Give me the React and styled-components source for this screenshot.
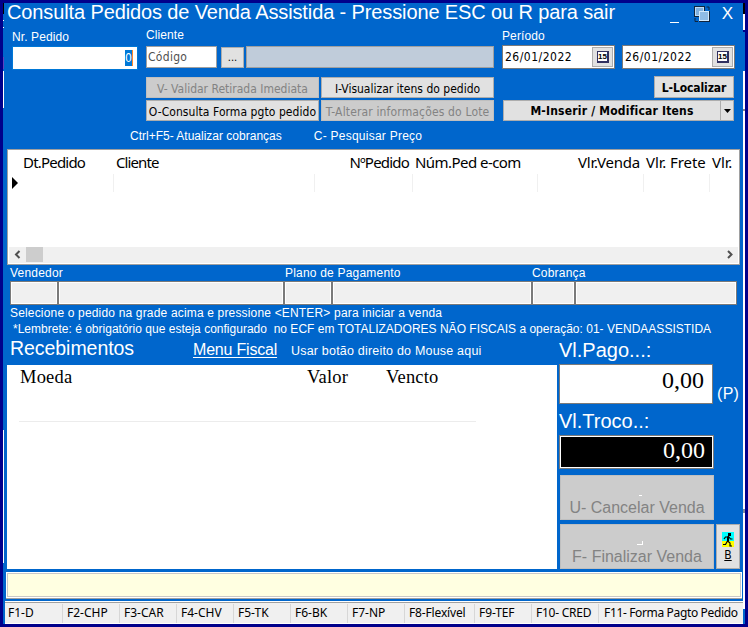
import styled, { createGlobalStyle, css } from "styled-components";

const arial = `"Liberation Sans", Arial, sans-serif`;
const tahoma = `"DejaVu Sans Condensed", "DejaVu Sans", Tahoma, sans-serif`;
const times = `"Liberation Serif", "Times New Roman", serif`;

const blue = "#0066cc";
const navy = "#00008b";

const columns = [
  { label: "Dt.Pedido", width: 93, spacing: -0.8 },
  { label: "Cliente", width: 201, spacing: -0.9 },
  { label: "NºPedido", width: 98, right: true, spacing: -0.8 },
  { label: "Núm.Ped e-com", width: 125 },
  { label: "Vlr.Venda", width: 106, right: true, spacing: -0.2 },
  { label: "Vlr. Frete", width: 66, spacing: -0.1 },
  { label: "Vlr.", width: 29, spacing: -0.1, last: true },
];

const lookups = [
  { label: "Vendedor", width: 274, code: 48 },
  { label: "Plano de Pagamento", width: 248, code: 48, indent: 1 },
  { label: "Cobrança", width: 205, code: 43 },
];

const keys = [
  { label: "F1-D", width: 58, pad: 3 },
  { label: "F2-CHP", width: 57 },
  { label: "F3-CAR", width: 57 },
  { label: "F4-CHV", width: 57 },
  { label: "F5-TK", width: 57 },
  { label: "F6-BK", width: 57 },
  { label: "F7-NP", width: 57 },
  { label: "F8-Flexível", width: 70, spacing: -0.15 },
  { label: "F9-TEF", width: 57, spacing: -0.1 },
  { label: "F10- CRED", width: 67, spacing: -0.25 },
  { label: "F11- Forma Pagto Pedido", width: 142, pad: 5, spacing: -0.35, last: true },
];

function WindowsIcon() {
  return (
    <svg width="16" height="16" viewBox="0 0 16 16">
      <path d="M1 12v3.500h3M12.500 1h2.500v3" fill="none" stroke="#10243c" />
      <rect x="0.5" y="0.5" width="10" height="10" fill="#7fb0de" stroke="#10243c" />
      <rect x="1.500" y="1.500" width="8" height="8" fill="none" stroke="#bcdcf6" />
      <rect x="5" y="5" width="11" height="11" fill="#10243c" />
      <rect x="5.500" y="5.500" width="9" height="9" fill="#8fbce6" stroke="#d2e9fc" />
    </svg>
  );
}

function WalkIcon() {
  return (
    <svg width="12" height="15" viewBox="0 0 12 15">
      <rect width="12" height="9" fill="#00ffff" />
      <rect y="9" width="12" height="6" fill="#ffff00" />
      <rect x="6" y="1" width="3" height="3" fill="#000" />
      <path
        d="M6.500 4L5.500 9L8 11V14H10M5.500 9L3.500 12.500H1M2 7L3.500 5H7L8.500 7H10.500"
        fill="none"
        stroke="#000"
        strokeWidth="1.2"
      />
      <path d="M5 4.500h2v5h-2z" fill="#000" />
    </svg>
  );
}

function DateField({ value }) {
  return (
    <DateBox>
      <span>{value}</span>
      <CalendarButton>
        <CalendarFace>15</CalendarFace>
      </CalendarButton>
    </DateBox>
  );
}

export default function App() {
  return (
    <>
      <Global />
      <Window>
        <LeftEdge />
        <Content>
          <TitleBar>
            <Title>Consulta Pedidos de Venda Assistida - Pressione ESC ou R para sair</Title>
            <TitleActions>
              <Minimize />
              <WindowsIcon />
              <Close>X</Close>
            </TitleActions>
          </TitleBar>

          <Search>
            <OrderColumn>
              <Label>Nr. Pedido</Label>
              <OrderInput>
                <Selected>0</Selected>
              </OrderInput>
            </OrderColumn>

            <ClientColumn>
              <Label $height={20}>Cliente</Label>
              <ClientRow>
                <CodeInput>Código</CodeInput>
                <MoreButton>...</MoreButton>
                <ClientName />
              </ClientRow>
              <ButtonGrid>
                <Button $disabled>V- Validar Retirada Imediata</Button>
                <Button>I-Visualizar itens do pedido</Button>
                <Button $spacing={0.07}>O-Consulta Forma pgto pedido</Button>
                <Button $disabled $spacing={0.15}>T-Alterar informações do Lote</Button>
              </ButtonGrid>
            </ClientColumn>

            <PeriodColumn>
              <Label>Período</Label>
              <Dates>
                <DateField value="26/01/2022" />
                <DateField value="26/01/2022" />
              </Dates>
              <FindButton>L-Localizar</FindButton>
              <SplitButton>
                <span>M-Inserir / Modificar Itens</span>
                <SplitArrow>
                  <svg width="7" height="4" viewBox="0 0 7 4">
                    <path d="M0 0h7L3.500 4z" />
                  </svg>
                </SplitArrow>
              </SplitButton>
            </PeriodColumn>
          </Search>

          <Shortcuts>
            <Shortcut>Ctrl+F5- Atualizar cobranças</Shortcut>
            <Shortcut $spacing={0.25}>C- Pesquisar Preço</Shortcut>
          </Shortcuts>

          <Grid>
            <GridHeader>
              {columns.map((c) => (
                <HeaderCell key={c.label} $width={c.width} $right={c.right} $spacing={c.spacing}>
                  {c.label}
                </HeaderCell>
              ))}
            </GridHeader>
            <GridRow>
              <RowMarker width="6" height="12" viewBox="0 0 6 12">
                <path d="M0 0L6 6L0 12z" />
              </RowMarker>
              {columns.map((c) => (
                <Cell key={c.label} $width={c.width} $last={c.last} />
              ))}
            </GridRow>
            <Scrollbar>
              <svg width="17" height="15" viewBox="0 0 17 15">
                <path d="M10.500 4L7 7.500L10.500 11" fill="none" stroke="#505050" strokeWidth="2" />
              </svg>
              <Thumb />
              <svg width="17" height="15" viewBox="0 0 17 15">
                <path d="M7 4L10.500 7.500L7 11" fill="none" stroke="#505050" strokeWidth="2" />
              </svg>
            </Scrollbar>
          </Grid>

          <Lookups>
            {lookups.map((l) => (
              <Lookup key={l.label} $width={l.width}>
                <LookupLabel $indent={l.indent}>{l.label}</LookupLabel>
                <LookupFields>
                  <LookupField $width={l.code} />
                  <LookupField />
                </LookupFields>
              </Lookup>
            ))}
          </Lookups>

          <Hint>Selecione o pedido na grade acima e pressione &lt;ENTER&gt; para iniciar a venda</Hint>
          <Reminder>
            {"*Lembrete: é obrigatório que esteja configurado  no ECF em TOTALIZADORES NÃO FISCAIS a operação: 01- VENDAASSISTIDA"}
          </Reminder>

          <Bottom>
            <Receipts>
              <ReceiptsHead>
                <Heading>Recebimentos</Heading>
                <FiscalMenu>Menu Fiscal</FiscalMenu>
                <MouseHint>Usar botão direito do Mouse aqui</MouseHint>
              </ReceiptsHead>
              <ReceiptsPanel>
                <ReceiptsColumns>
                  <span>Moeda</span>
                  <span>Valor</span>
                  <span>Vencto</span>
                </ReceiptsColumns>
              </ReceiptsPanel>
            </Receipts>

            <Totals>
              <TotalLabel $height={28} $line={28}>Vl.Pago...:</TotalLabel>
              <PaidRow>
                <Paid>0,00</Paid>
                <PaidFlag>(P)</PaidFlag>
              </PaidRow>
              <TotalLabel $height={31} $line={35}>Vl.Troco..:</TotalLabel>
              <Change>0,00</Change>
              <BigButton>
                <Speck />
                U- Cancelar Venda
              </BigButton>
              <FinishRow>
                <BigButton>
                  <Speck $large />
                  F- Finalizar Venda
                </BigButton>
                <ExitButton>
                  <WalkIcon />
                  <u>B</u>
                </ExitButton>
              </FinishRow>
            </Totals>
          </Bottom>

          <Message />

          <StatusBar>
            {keys.map((k) => (
              <StatusKey
                key={k.label}
                $width={k.width}
                $pad={k.pad}
                $spacing={k.spacing}
                $last={k.last}
              >
                {k.label}
              </StatusKey>
            ))}
          </StatusBar>
        </Content>
        <RightEdge />
      </Window>
    </>
  );
}

const Global = createGlobalStyle`
  * {
    box-sizing: border-box;
  }
  body {
    margin: 0;
    overflow: hidden;
  }
  svg {
    display: block;
    flex: none;
  }
`;

const Window = styled.div`
  width: 748px;
  height: 627px;
  display: flex;
  border: 3px solid ${navy};
  background: ${blue};
  font-family: ${arial};
  font-size: 12px;
  color: #ffffff;
  white-space: pre;
`;

const LeftEdge = styled.div`
  width: 1px;
  background: linear-gradient(
    #000 0 11px, ${blue} 11px 17px, #fff 17px 18px, ${blue} 18px 24px, #fff 24px 25px,
    ${blue} 25px 54px, #6040c0 54px 66px, ${blue} 66px 68px, #fff 68px 105px,
    ${blue} 105px 427px, #fff 427px 560px, ${blue} 560px
  );
`;

const RightEdge = styled.div`
  width: 2px;
  background: linear-gradient(
    #000 0 11px, #fff 11px 27px, ${navy} 27px 29px, ${blue} 29px 68px, #fff 68px 106px,
    #888 106px 108px, #fff 108px 506px, #8090a0 506px 510px, #fff 510px 606px, ${blue} 606px
  );
`;

const Content = styled.div`
  width: 739px;
  display: flex;
  flex-direction: column;
`;

const TitleBar = styled.div`
  height: 21px;
  display: flex;
  justify-content: space-between;
  padding: 0 10px 0 3px;
`;

const Title = styled.div`
  font-size: 20px;
  line-height: 18px;
  letter-spacing: -0.12px;
`;

const TitleActions = styled.div`
  display: flex;
  align-items: center;
`;

const Minimize = styled.div`
  width: 9px;
  height: 1px;
  margin: 17px 15px 0 0;
  background: #ffffff;
`;

const Close = styled.div`
  margin-left: 12px;
  font-size: 17px;
  line-height: 20px;
`;

const Search = styled.div`
  height: 102px;
  display: flex;
  padding-left: 8px;
`;

const Label = styled.div`
  height: ${({ $height = 18 }) => $height}px;
  line-height: 18px;
  letter-spacing: 0.1px;
`;

const OrderColumn = styled.div`
  width: 134px;
  padding-top: 4px;
`;

const OrderInput = styled.div`
  width: 126px;
  height: 24px;
  display: flex;
  justify-content: flex-end;
  padding: 3px 4px;
  border: 1px solid #0078d7;
  background: #ffffff;
`;

const Selected = styled.span`
  width: 8px;
  height: 16px;
  background: #0078d7;
  border-right: 1px solid #ff8728;
  font: 12px/16px ${tahoma};
`;

const ClientColumn = styled.div`
  width: 356px;
  padding-top: 2px;
`;

const ClientRow = styled.div`
  display: flex;
  height: 22px;
`;

const CodeInput = styled.div`
  width: 71px;
  padding-left: 1px;
  border: 1px solid #a0a0a0;
  background: #ffffff;
  color: #505050;
  font: 12px/20px ${tahoma};
  letter-spacing: 0.3px;
`;

const buttonFace = css`
  border: 1px solid #adadad;
  background: #e1e1e1;
  color: #000000;
  text-align: center;
  font-family: ${tahoma};
`;

const MoreButton = styled.div`
  ${buttonFace}
  width: 23px;
  height: 21px;
  margin: 1px 2px 0 4px;
  font-size: 11px;
  line-height: 20px;
`;

const ClientName = styled.div`
  width: 248px;
  border: 1px solid #a0a0a0;
  background: #c0ccda;
`;

const ButtonGrid = styled.div`
  display: grid;
  grid-template-columns: 173px 173px;
  grid-auto-rows: 21px;
  gap: 2px;
  padding-top: 9px;
`;

const Button = styled.div`
  ${buttonFace}
  font-size: 12px;
  line-height: 22px;
  letter-spacing: ${({ $spacing = 0 }) => $spacing}px;
  ${({ $disabled }) =>
    $disabled &&
    css`
      background: #cccccc;
      color: #838383;
      border-color: #bfbfbf;
    `}
`;

const PeriodColumn = styled.div`
  width: 234px;
  padding-top: 3px;
`;

const Dates = styled.div`
  display: flex;
  gap: 7px;
`;

const DateBox = styled.div`
  width: 113px;
  height: 24px;
  display: flex;
  justify-content: space-between;
  padding: 1px 1px 1px 2px;
  border: 1px solid #7a7a7a;
  background: #ffffff;
  color: #000000;
  font: 12px/20px ${tahoma};
  letter-spacing: 0.5px;
`;

const CalendarButton = styled.div`
  width: 21px;
  height: 20px;
  padding: 3px 4px;
  border: 1px solid #adadad;
  background: #e1e1e1;
`;

const CalendarFace = styled.div`
  width: 12px;
  height: 12px;
  border: 1px solid #303060;
  border-width: 1px 2px 2px 1px;
  background: #ffffff;
  font: bold 8px/9px ${arial};
  letter-spacing: 0;
`;

const FindButton = styled.div`
  ${buttonFace}
  width: 80px;
  height: 22px;
  margin: 7px 0 2px 152px;
  font-size: 12px;
  font-weight: bold;
  line-height: 22px;
  letter-spacing: -0.1px;
`;

const SplitButton = styled.div`
  ${buttonFace}
  width: 231px;
  height: 21px;
  margin-left: 1px;
  display: flex;
  font-size: 12px;
  font-weight: bold;
  line-height: 20px;
  letter-spacing: 0.2px;

  span {
    flex: 1;
  }
`;

const SplitArrow = styled.div`
  width: 13px;
  display: flex;
  align-items: center;
  justify-content: center;
  border-left: 1px solid #adadad;
`;

const Shortcuts = styled.div`
  height: 23px;
  display: flex;
  gap: 32px;
  padding-left: 126px;
  line-height: 20px;
`;

const Shortcut = styled.span`
  letter-spacing: ${({ $spacing = 0 }) => $spacing}px;
`;

const Grid = styled.div`
  width: 733px;
  height: 116px;
  margin-left: 3px;
  display: flex;
  flex-direction: column;
  padding: 0 1px;
  border: 1px solid #a0a0a0;
  background: #ffffff;
`;

const GridHeader = styled.div`
  height: 24px;
  display: flex;
  padding-left: 12px;
  color: #000000;
  font: 15px/25px "Noto Sans", ${tahoma};
`;

const HeaderCell = styled.div`
  width: ${({ $width }) => $width}px;
  flex: none;
  padding: 0 4px 0 2px;
  text-align: ${({ $right }) => ($right ? "right" : "left")};
  letter-spacing: ${({ $spacing = -0.55 }) => $spacing}px;
`;

const GridRow = styled.div`
  height: 18px;
  display: flex;
`;

const RowMarker = styled.svg`
  margin: 3px 4px 0 3px;
`;

const Cell = styled.div`
  width: ${({ $width }) => $width}px;
  flex: none;
  margin-left: -1px;
  margin-right: 1px;
  border-right: ${({ $last }) => ($last ? "none" : "1px solid #f0f0f0")};
`;

const Scrollbar = styled.div`
  height: 17px;
  margin-top: auto;
  display: flex;
  background: #f0f0f0;
  border-bottom: 1px solid #ffffff;

  svg:last-child {
    margin-left: auto;
  }
`;

const Thumb = styled.div`
  width: 17px;
  height: 15px;
  background: #cdcdcd;
`;

const Lookups = styled.div`
  display: flex;
  height: 40px;
  padding-left: 6px;
`;

const Lookup = styled.div`
  width: ${({ $width }) => $width}px;
`;

const LookupLabel = styled.div`
  height: 16px;
  padding-left: ${({ $indent = 0 }) => $indent}px;
  line-height: 16px;
  letter-spacing: 0.2px;
`;

const LookupFields = styled.div`
  display: flex;
  height: 24px;
`;

const LookupField = styled.div`
  ${({ $width }) => ($width ? `width: ${$width}px;` : "flex: 1;")}
  border: 1px solid #7a7a7a;
  background: #f0f0f0;
  box-shadow: inset 0 0 0 1px #ffffff;
`;

const Hint = styled.div`
  height: 16px;
  padding-left: 6px;
  line-height: 16px;
  letter-spacing: 0.17px;
`;

const Reminder = styled.div`
  height: 15px;
  padding-left: 9px;
  line-height: 16px;
  letter-spacing: 0.01px;
`;

const Bottom = styled.div`
  height: 233px;
  display: flex;
`;

const Receipts = styled.div`
  width: 555px;
  padding-left: 3px;
`;

const ReceiptsHead = styled.div`
  height: 29px;
  display: flex;
  align-items: baseline;
  padding-left: 3px;
`;

const Heading = styled.div`
  width: 183px;
  font-size: 19.500px;
  line-height: 24px;
  letter-spacing: -0.05px;
`;

const FiscalMenu = styled.div`
  width: 98px;
  font-size: 16px;
  letter-spacing: -0.2px;
  text-decoration: underline;
  text-underline-offset: 2px;
`;

const MouseHint = styled.div`
  font-size: 12.500px;
  letter-spacing: 0.2px;
`;

const ReceiptsPanel = styled.div`
  width: 550px;
  height: 204px;
  padding-left: 12px;
  background: #ffffff;
`;

const ReceiptsColumns = styled.div`
  width: 457px;
  height: 57px;
  display: grid;
  grid-template-columns: 287px 79px auto;
  padding-left: 1px;
  border-bottom: 1px solid #ececec;
  color: #000000;
  font: 18.500px/24px ${times};
  letter-spacing: 0.2px;
`;

const Totals = styled.div`
  width: 182px;
`;

const TotalLabel = styled.div`
  height: ${({ $height }) => $height}px;
  font-size: 20px;
  line-height: ${({ $line }) => $line}px;
`;

const PaidRow = styled.div`
  display: flex;
`;

const Paid = styled.div`
  width: 154px;
  height: 40px;
  padding-right: 8px;
  border: 1px solid #7a7a7a;
  background: #ffffff;
  color: #000000;
  text-align: right;
  font: 24px/31px ${times};
`;

const PaidFlag = styled.div`
  margin-left: 4px;
  padding-top: 20px;
  font-size: 16px;
  line-height: 20px;
  letter-spacing: 0.3px;
`;

const Change = styled.div`
  width: 155px;
  height: 34px;
  margin-bottom: 6px;
  padding-right: 8px;
  border: 1px solid #7a7a7a;
  box-shadow: inset 0 0 0 1px #ffffff;
  background: #000000;
  text-align: right;
  font: 24px/29px ${times};
`;

const BigButton = styled.div`
  width: 154px;
  height: 45px;
  margin-left: 1px;
  display: flex;
  flex-direction: column;
  align-items: center;
  justify-content: flex-end;
  border: 1px solid #bfbfbf;
  background: #cccccc;
  color: #838383;
  font-size: 16px;
  line-height: 22px;
`;

const Speck = styled.i`
  width: ${({ $large }) => ($large ? 6 : 3)}px;
  height: ${({ $large }) => ($large ? 4 : 1)}px;
  margin: 0 0 1px 6px;
  border-right: 1px solid #ffffff;
  border-bottom: 1px solid #ffffff;
`;

const FinishRow = styled.div`
  display: flex;
  gap: 2px;
  margin-top: 4px;
`;

const ExitButton = styled.div`
  ${buttonFace}
  width: 24px;
  height: 45px;
  display: flex;
  flex-direction: column;
  align-items: center;
  padding-top: 7px;
  font-size: 12px;
  line-height: 16px;
`;

const Message = styled.div`
  width: 736px;
  height: 26px;
  margin: 3px 0 3px 2px;
  border: 1px solid #ffffff;
  box-shadow: inset 0 0 0 1px #c8c8c8, 0 1px 0 #a0a0a0;
  background: #ffffe1;
`;

const StatusBar = styled.div`
  width: 738px;
  height: 23px;
  display: flex;
  padding-top: 2px;
  margin-left: 1px;
  border-top: 1px solid #ffffff;
  border-bottom: 1px solid #ffffff;
  box-shadow: inset 0 1px 0 #a0a0a0;
  background: #f0f0f0;
  color: #000000;
  font: 12px/18px "Noto Sans", ${tahoma};
`;

const StatusKey = styled.div`
  width: ${({ $width }) => $width}px;
  flex: none;
  padding-left: ${({ $pad = 4 }) => $pad}px;
  border-right: ${({ $last }) => ($last ? "none" : "1px solid #d7d7d7")};
  letter-spacing: ${({ $spacing = 0 }) => $spacing}px;
`;
